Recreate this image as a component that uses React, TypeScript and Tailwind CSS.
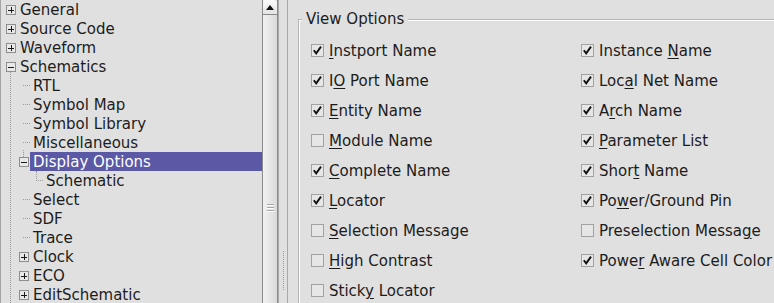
import React from "react";

type TreeItem = {
  label: string;
  level: 0 | 1 | 2;
  kind: "plus" | "minus" | "leaf";
  selected?: boolean;
};

const treeItems: TreeItem[] = [
  { label: "General", level: 0, kind: "plus" },
  { label: "Source Code", level: 0, kind: "plus" },
  { label: "Waveform", level: 0, kind: "plus" },
  { label: "Schematics", level: 0, kind: "minus" },
  { label: "RTL", level: 1, kind: "leaf" },
  { label: "Symbol Map", level: 1, kind: "leaf" },
  { label: "Symbol Library", level: 1, kind: "leaf" },
  { label: "Miscellaneous", level: 1, kind: "leaf" },
  { label: "Display Options", level: 1, kind: "minus", selected: true },
  { label: "Schematic", level: 2, kind: "leaf" },
  { label: "Select", level: 1, kind: "leaf" },
  { label: "SDF", level: 1, kind: "leaf" },
  { label: "Trace", level: 1, kind: "leaf" },
  { label: "Clock", level: 1, kind: "plus" },
  { label: "ECO", level: 1, kind: "plus" },
  { label: "EditSchematic", level: 1, kind: "plus" },
];

// indent spacer per tree level
const indent = ["w-0", "w-[13px]", "w-[26px]"];

type Option = { label: string; u: number; checked: boolean };

const leftOptions: Option[] = [
  { label: "Instport Name", u: 0, checked: true },
  { label: "IO Port Name", u: 1, checked: true },
  { label: "Entity Name", u: 0, checked: true },
  { label: "Module Name", u: 0, checked: false },
  { label: "Complete Name", u: 0, checked: true },
  { label: "Locator", u: 0, checked: true },
  { label: "Selection Message", u: 0, checked: false },
  { label: "High Contrast", u: 0, checked: false },
  { label: "Sticky Locator", u: 5, checked: false },
];

const rightOptions: Option[] = [
  { label: "Instance Name", u: 9, checked: true },
  { label: "Local Net Name", u: 3, checked: true },
  { label: "Arch Name", u: 1, checked: true },
  { label: "Parameter List", u: 0, checked: true },
  { label: "Short Name", u: 4, checked: true },
  { label: "Power/Ground Pin", u: 2, checked: true },
  { label: "Preselection Message", u: 18, checked: false },
  { label: "Power Aware Cell Color", u: 4, checked: true },
];

function ExpandBox({ open }: { open: boolean }) {
  return (
    <span className="absolute left-[5px] top-[5px] w-[10px] h-[10px] border border-[#8e8e8e] bg-[#e8e8e8]">
      <span className="absolute left-[1px] top-[3.5px] w-[6px] h-px bg-[#1a1a1a]" />
      {!open && <span className="absolute left-[3.5px] top-[1px] w-px h-[6px] bg-[#1a1a1a]" />}
    </span>
  );
}

function TreeRow({ item }: { item: TreeItem }) {
  return (
    <div className="flex h-[19px] shrink-0">
      <div className={indent[item.level]} />
      <div className="relative w-[16px] h-[19px] shrink-0">
        {item.selected && (
          <span className="absolute left-[9px] -top-[2px] h-[7px] border-l border-dotted border-[#9a9a9a]" />
        )}
        {item.kind === "leaf" ? (
          <>
            {item.level === 2 && (
              <span className="absolute left-[9px] top-0 h-[10px] border-l border-dotted border-[#9a9a9a]" />
            )}
            <span className="absolute left-[9px] top-[9px] w-[7px] border-t border-dotted border-[#9a9a9a]" />
          </>
        ) : (
          <ExpandBox open={item.kind === "minus"} />
        )}
      </div>
      <div
        className={
          item.selected
            ? "flex-1 pl-[3px] pt-[1px] leading-[18px] bg-[#5b59a6] text-white"
            : "pl-[3px] pt-[1px] leading-[18px]"
        }
      >
        {item.label}
      </div>
    </div>
  );
}

function Mnemonic({ label, u }: { label: string; u: number }) {
  return (
    <span>
      {label.slice(0, u)}
      <span className="underline underline-offset-[2px]">{label[u]}</span>
      {label.slice(u + 1)}
    </span>
  );
}

function CheckRow({ opt }: { opt: Option }) {
  return (
    <div className="flex items-center h-[30px] gap-[5px]">
      <span className="w-[13px] h-[13px] shrink-0 border border-[#a2a2a2] bg-[#e6e6e6] flex items-center justify-center">
        {opt.checked && (
          <svg width="11" height="11" viewBox="0 0 11 11">
            <path d="M1.8 5.2 L4.2 8.4 L9 1.6" fill="none" stroke="#111" strokeWidth="1.9" />
          </svg>
        )}
      </span>
      <span className="leading-[30px] pt-[2px] whitespace-nowrap">
        <Mnemonic label={opt.label} u={opt.u} />
      </span>
    </div>
  );
}

export default function App() {
  return (
    <div className="w-[774px] h-[303px] flex overflow-hidden bg-[#e0e0e0] text-[#1c1c1c] text-[15px] font-['DejaVu_Sans',sans-serif]">
      {/* tree */}
      <div className="relative w-[262px] h-full border-l border-[#a4a4a4] flex flex-col overflow-hidden">
        <span className="absolute left-[9px] top-[72px] bottom-0 border-l border-dotted border-[#9a9a9a]" />
        {treeItems.map((it) => (
          <TreeRow key={it.label} item={it} />
        ))}
      </div>

      {/* scrollbar */}
      <div className="w-[16px] h-full flex flex-col border-x border-[#8a8a8a] bg-gradient-to-r from-[#f2f2f2] to-[#dadada]">
        <div className="h-[15px] shrink-0 border-b border-[#8a8a8a] rounded-t-[3px] bg-gradient-to-b from-[#fafafa] to-[#e4e4e4] flex items-center justify-center">
          <svg width="8" height="5" viewBox="0 0 8 5">
            <path d="M0 5 L4 0 L8 5 Z" fill="#111" />
          </svg>
        </div>
        <div className="flex-1 flex flex-col items-center pt-[189px] gap-[2px]">
          <span className="w-[7px] h-px bg-[#a8a8a8] shadow-[0_1px_0_#fff]" />
          <span className="w-[7px] h-px bg-[#a8a8a8] shadow-[0_1px_0_#fff]" />
          <span className="w-[7px] h-px bg-[#a8a8a8] shadow-[0_1px_0_#fff]" />
        </div>
      </div>
      <div className="w-px h-full bg-[#a8a8a8]" />

      {/* splitter */}
      <div className="w-[8px] h-full flex flex-col items-center pt-[251px]">
        <span className="h-[39px] border-l border-dotted border-[#9c9c9c] ml-[1px]" />
      </div>
      <div className="w-px h-full bg-[#a8a8a8]" />

      {/* options */}
      <div className="flex-1 h-full pl-[10px] pt-[19px]">
        <div className="relative h-[300px] border-t border-l border-[#b4b4b4] shadow-[inset_1px_1px_0_#ffffff] pt-[15px] pl-[12px]">
          <span className="absolute -top-[11px] left-[3px] px-[4px] leading-[19px] pt-[1px] bg-[#e0e0e0]">
            View Options
          </span>
          <div className="grid grid-cols-[270px_1fr]">
            <div className="flex flex-col">
              {leftOptions.map((o) => (
                <CheckRow key={o.label} opt={o} />
              ))}
            </div>
            <div className="flex flex-col">
              {rightOptions.map((o) => (
                <CheckRow key={o.label} opt={o} />
              ))}
            </div>
          </div>
        </div>
      </div>
    </div>
  );
}
